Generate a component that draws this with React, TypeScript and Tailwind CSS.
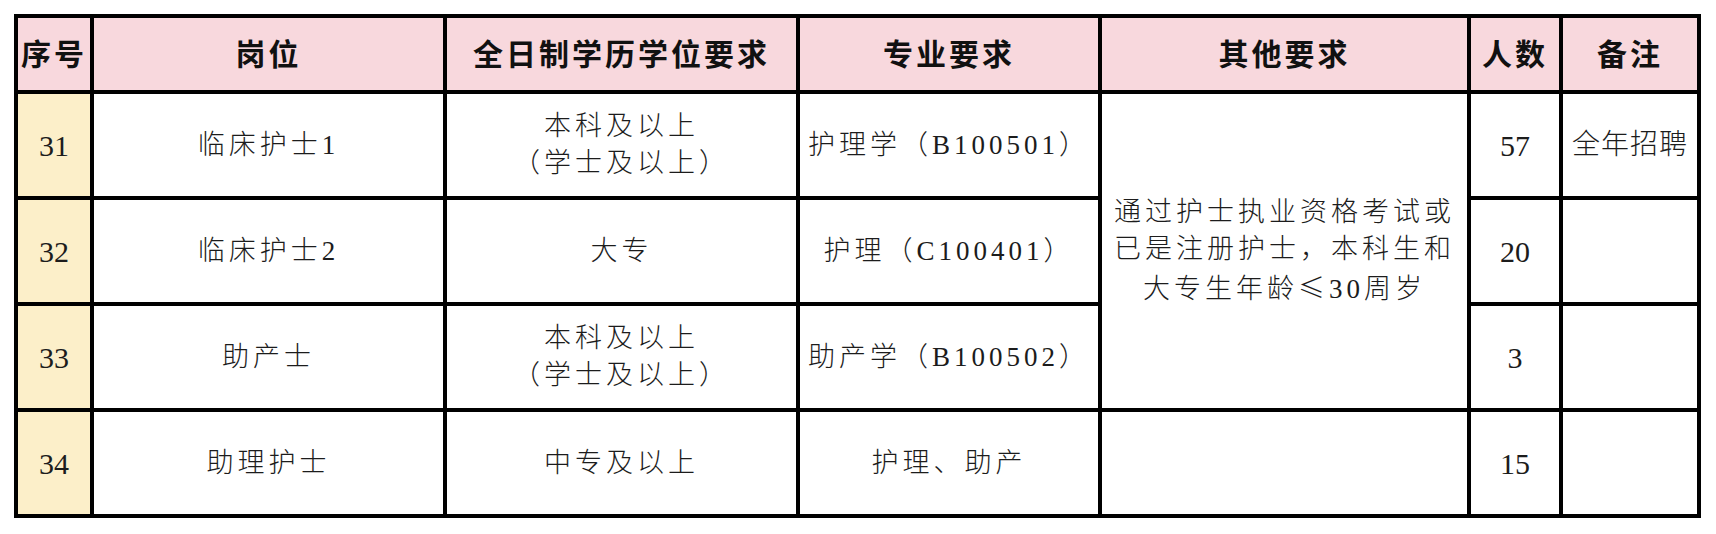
const headers = ["序号", "岗位", "全日制学历学位要求", "专业要求", "其他要求", "人数", "备注"];

const rows = [
  { no: "31", post: "临床护士1", edu: ["本科及以上", "（学士及以上）"], major: "护理学（B100501）", count: "57", note: "全年招聘" },
  { no: "32", post: "临床护士2", edu: ["大专"], major: "护理（C100401）", count: "20", note: "" },
  { no: "33", post: "助产士", edu: ["本科及以上", "（学士及以上）"], major: "助产学（B100502）", count: "3", note: "" },
  { no: "34", post: "助理护士", edu: ["中专及以上"], major: "护理、助产", count: "15", note: "" },
];

const body =
  "flex flex-col items-center justify-center bg-white text-center text-[27px] font-light leading-[37px] tracking-[4px] text-[#1c1c1c]";
const num = "flex items-center justify-center text-[30px] text-[#1c1c1c]";

const App = () => {
  return (
    <div className="min-h-screen bg-white pl-[14px] pt-[14px] font-['Liberation_Serif','Noto_Sans_CJK_SC',serif]">
      <div className="grid w-fit grid-cols-[72px_349px_349px_298px_365px_88px_134px] grid-rows-[72px_102px_102px_102px_102px] gap-[4px] bg-black p-[4px]">
        {headers.map((h) => (
          <div
            key={h}
            className="flex items-center justify-center bg-[#f8d8dd] text-[30px] font-semibold tracking-[3px] text-[#111]"
          >
            {h}
          </div>
        ))}

        {rows.map((r, i) => (
          <>
            <div key={r.no + "n"} className={`${num} bg-[#fcefc9]`}>
              {r.no}
            </div>
            <div key={r.no + "p"} className={body}>{r.post}</div>
            <div key={r.no + "e"} className={body}>
              {r.edu.map((line) => (
                <span key={line}>{line}</span>
              ))}
            </div>
            <div key={r.no + "m"} className={body}>{r.major}</div>
            {i === 0 && (
              <div key="other" className={`${body} row-span-3 px-[6px]`}>
                <span>通过护士执业资格考试或</span>
                <span>已是注册护士，本科生和</span>
                <span>
                  大专生年龄<span className="font-['Noto_Sans_CJK_SC',sans-serif]">≤</span>30周岁
                </span>
              </div>
            )}
            {i === 3 && <div key="other-empty" className="bg-white" />}
            <div key={r.no + "c"} className={`${num} bg-white`}>
              {r.count}
            </div>
            <div
              key={r.no + "r"}
              className="flex items-center justify-center bg-white text-[28px] font-light tracking-[1px] text-[#1c1c1c]"
            >
              {r.note}
            </div>
          </>
        ))}
      </div>
    </div>
  );
};

export default App;
